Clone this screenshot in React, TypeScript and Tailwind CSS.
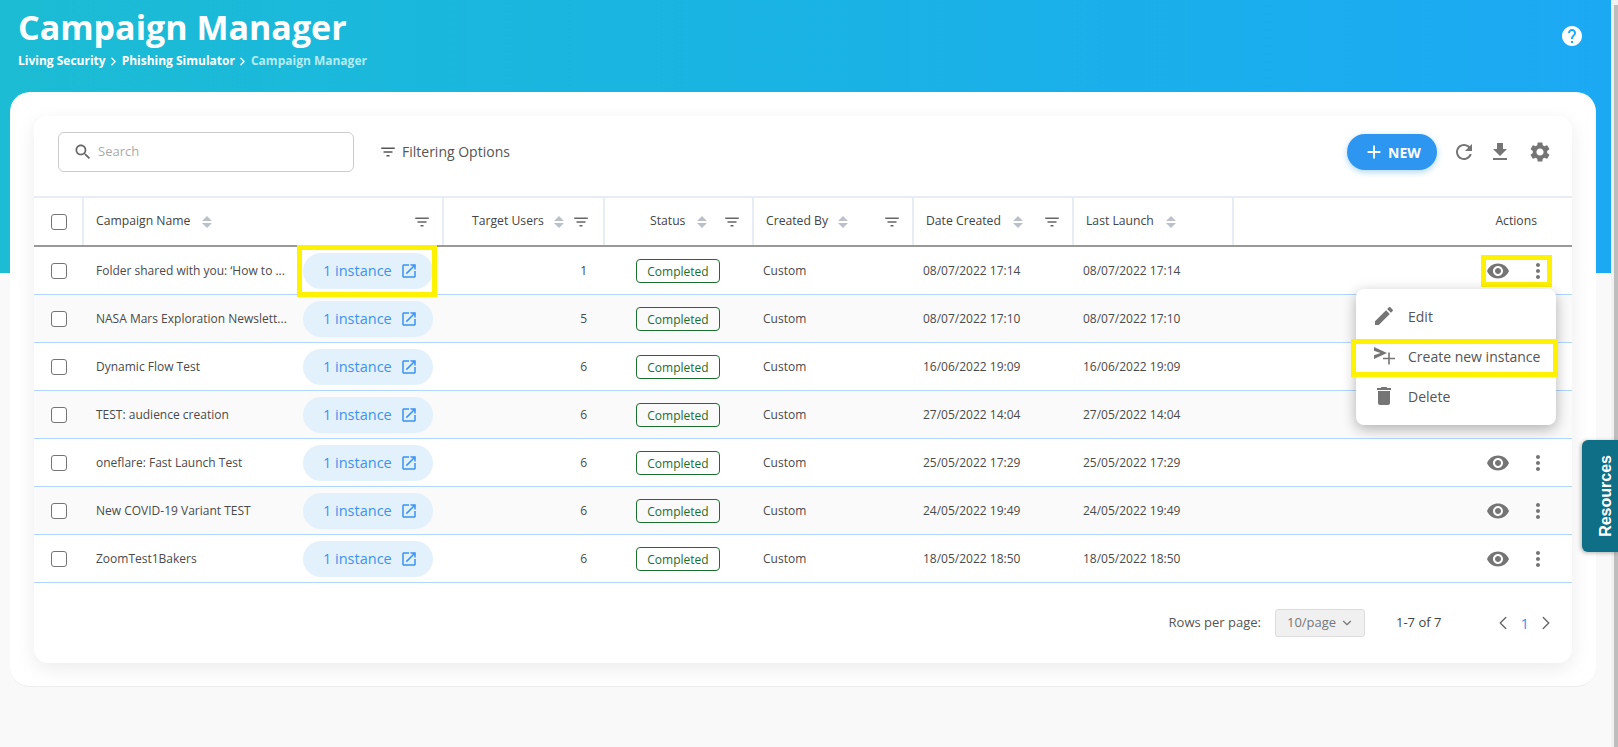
import React from 'react';
import { ChevronDown, ChevronLeft, ChevronRight } from 'lucide-react';

const P = {
  search: 'M15.5 14h-.79l-.28-.27C15.41 12.59 16 11.11 16 9.5 16 5.91 13.09 3 9.5 3S3 5.91 3 9.5 5.91 16 9.5 16c1.61 0 3.09-.59 4.23-1.57l.27.28v.79l5 4.99L20.49 19l-4.99-5zm-6 0C7.01 14 5 11.99 5 9.5S7.01 5 9.5 5 14 7.01 14 9.5 11.99 14 9.5 14z',
  filter: 'M10 18h4v-2h-4v2zM3 6v2h18V6H3zm3 7h12v-2H6v2z',
  refresh: 'M17.65 6.35C16.2 4.9 14.21 4 12 4c-4.42 0-7.99 3.58-7.99 8s3.57 8 7.99 8c3.73 0 6.84-2.55 7.73-6h-2.08c-.82 2.33-3.04 4-5.65 4-3.31 0-6-2.69-6-6s2.69-6 6-6c1.66 0 3.14.69 4.22 1.78L13 11h7V4l-2.35 2.35z',
  download: 'M19 9h-4V3H9v6H5l7 7 7-7zM5 18v2h14v-2H5z',
  gear: 'M19.14 12.94c.04-.3.06-.61.06-.94 0-.32-.02-.64-.07-.94l2.03-1.58c.18-.14.23-.41.12-.61l-1.92-3.32c-.12-.22-.37-.29-.59-.22l-2.39.96c-.5-.38-1.03-.7-1.62-.94l-.36-2.54c-.04-.24-.24-.41-.48-.41h-3.84c-.24 0-.43.17-.47.41l-.36 2.54c-.59.24-1.13.57-1.62.94l-2.39-.96c-.22-.08-.47 0-.59.22L2.74 8.87c-.12.21-.08.47.12.61l2.03 1.58c-.05.3-.09.63-.09.94s.02.64.07.94l-2.03 1.58c-.18.14-.23.41-.12.61l1.92 3.32c.12.22.37.29.59.22l2.39-.96c.5.38 1.03.7 1.62.94l.36 2.54c.05.24.24.41.48.41h3.84c.24 0 .44-.17.47-.41l.36-2.54c.59-.24 1.13-.56 1.62-.94l2.39.96c.22.08.47 0 .59-.22l1.92-3.32c.12-.22.07-.47-.12-.61l-2.01-1.58zM12 15.6c-1.98 0-3.6-1.62-3.6-3.6s1.62-3.6 3.6-3.6 3.6 1.62 3.6 3.6-1.62 3.6-3.6 3.6z',
  eye: 'M12 4.5C7 4.5 2.73 7.61 1 12c1.73 4.39 6 7.5 11 7.5s9.27-3.11 11-7.5c-1.73-4.39-6-7.5-11-7.5zM12 17c-2.76 0-5-2.24-5-5s2.24-5 5-5 5 2.24 5 5-2.24 5-5 5zm0-8c-1.66 0-3 1.34-3 3s1.34 3 3 3 3-1.34 3-3-1.34-3-3-3z',
  dots: 'M12 8c1.1 0 2-.9 2-2s-.9-2-2-2-2 .9-2 2 .9 2 2 2zm0 2c-1.1 0-2 .9-2 2s.9 2 2 2 2-.9 2-2-.9-2-2-2zm0 6c-1.1 0-2 .9-2 2s.9 2 2 2 2-.9 2-2-.9-2-2-2z',
  open: 'M19 19H5V5h7V3H5c-1.11 0-2 .9-2 2v14c0 1.1.89 2 2 2h14c1.1 0 2-.9 2-2v-7h-2v7zM14 3v2h3.59l-9.83 9.83 1.41 1.41L19 6.41V10h2V3h-7z',
  edit: 'M3 17.25V21h3.75L17.81 9.94l-3.75-3.75L3 17.25zM20.71 7.04c.39-.39.39-1.02 0-1.41l-2.34-2.34c-.39-.39-1.02-.39-1.41 0l-1.83 1.83 3.75 3.75 1.83-1.83z',
  trash: 'M6 19c0 1.1.9 2 2 2h8c1.1 0 2-.9 2-2V7H6v12zM19 4h-3.5l-1-1h-5l-1 1H5v2h14V4z',
  help: 'M12 2C6.48 2 2 6.48 2 12s4.48 10 10 10 10-4.48 10-10S17.52 2 12 2zm1 17h-2v-2h2v2zm2.07-7.75l-.9.92C13.45 12.9 13 13.5 13 15h-2v-.5c0-1.1.45-2.1 1.17-2.83l1.24-1.26c.37-.36.59-.86.59-1.41 0-1.1-.9-2-2-2s-2 .9-2 2H8c0-2.21 1.79-4 4-4s4 1.79 4 4c0 .88-.36 1.68-.93 2.25z',
  plus: 'M19 13h-6v6h-2v-6H5v-2h6V5h2v6h6v2z',
  sendPlus: 'M2 3 15 9 2 15V11.2L8.5 9 2 6.8zM16.2 8.5h1.6v5.2H23v1.6h-5.2v5.2h-1.6v-5.2H11v-1.6h5.2z',
};

const Icon = ({ d, className }: { d: string; className: string }) => (
  <svg viewBox="0 0 24 24" fill="currentColor" className={className}>
    <path d={d} />
  </svg>
);

const Sort = ({ className = '' }: { className?: string }) => (
  <svg viewBox="0 0 10 14" className={`h-[14px] w-[10px] shrink-0 fill-[#bcc0c9] ${className}`}>
    <path d="M5 1 10 6H0zM5 13 0 8h10z" />
  </svg>
);

const Filter = ({ className = '' }: { className?: string }) => (
  <Icon d={P.filter} className={`h-[18px] w-[18px] shrink-0 text-[#666] ${className}`} />
);

const rows = [
  { name: 'Folder shared with you: ‘How to ...', users: 1, date: '08/07/2022 17:14' },
  { name: 'NASA Mars Exploration Newslett...', users: 5, date: '08/07/2022 17:10' },
  { name: 'Dynamic Flow Test', users: 6, date: '16/06/2022 19:09' },
  { name: 'TEST: audience creation', users: 6, date: '27/05/2022 14:04' },
  { name: 'oneflare: Fast Launch Test', users: 6, date: '25/05/2022 17:29' },
  { name: 'New COVID-19 Variant TEST', users: 6, date: '24/05/2022 19:49' },
  { name: 'ZoomTest1Bakers', users: 6, date: '18/05/2022 18:50' },
];

const cols = 'grid grid-cols-[50px_360px_161px_149px_160px_160px_160px_1fr]';
const headCell = 'flex items-center border-r-2 border-[#e8ecf5]';

function Checkbox() {
  return <span className="block h-4 w-4 rounded-[3px] border border-[#757575] bg-white" />;
}

export default function App() {
  return (
    <div className="relative flex h-[747px] w-[1618px] overflow-hidden bg-[#f9f9f9] font-['Open_Sans',sans-serif]">
      <main className="w-[1611px] shrink-0">
        {/* Header */}
        <header className="flex h-[273px] items-start justify-between bg-linear-to-r from-[#1cbcd4] to-[#1ca9f4] pl-[18px] pr-[27px] text-white">
          <div>
            <h1 className="mt-[3px] text-[34px] font-bold leading-[48px]">Campaign Manager</h1>
            <div className="mt-[1px] flex items-center text-[12px] font-bold leading-[18px]">
              <span>Living Security</span>
              <ChevronRight size={13} strokeWidth={2.5} className="mx-[1.5px]" />
              <span>Phishing Simulator</span>
              <ChevronRight size={13} strokeWidth={2.5} className="mx-[1.5px]" />
              <span className="text-[#b5ecf3]">Campaign Manager</span>
            </div>
          </div>
          <Icon d={P.help} className="mt-[24px] h-6 w-6" />
        </header>

        {/* White panel */}
        <section className="mx-[10px] mt-[-181px] h-[595px] w-[1586px] rounded-[20px] border-b border-[#eee] bg-white px-[24px] pt-[24px]">
          <div className="relative h-[547px] rounded-[14px] bg-white shadow-[0_6px_20px_rgba(0,0,0,0.08)]">
            {/* Toolbar */}
            <div className="flex h-[80px] items-center pb-[8px] pl-[24px] pr-[20px]">
              <div className="flex h-[40px] w-[296px] items-center rounded-[6px] border border-[#ccc] pl-[14px]">
                <Icon d={P.search} className="h-5 w-5 text-[#666]" />
                <span className="ml-[5px] text-[13px] text-[#aaa]">Search</span>
              </div>
              <Icon d={P.filter} className="ml-[25px] h-[18px] w-[18px] text-[#555]" />
              <span className="ml-[5px] mt-[-2px] text-[14px] text-[#555]">Filtering Options</span>
              <button className="ml-auto flex h-[36px] w-[90px] items-center justify-center rounded-full bg-[#2d96f0] text-[14px] font-bold text-white shadow-[0_2px_6px_rgba(45,150,240,0.4)]">
                <Icon d={P.plus} className="mr-[3px] h-[22px] w-[22px]" />
                NEW
              </button>
              <Icon d={P.refresh} className="ml-[15px] h-[24px] w-[24px] text-[#757575]" />
              <Icon d={P.download} className="ml-[12px] h-[24px] w-[24px] text-[#757575]" />
              <Icon d={P.gear} className="ml-[16px] h-[24px] w-[24px] text-[#757575]" />
            </div>

            {/* Table head */}
            <div className={`${cols} h-[51px] border-y-2 border-t-[#e8ecf5] border-b-[#999] text-[12.2px] font-medium text-[#444]`}>
              <div className={`${headCell} pl-[17px]`}><Checkbox /></div>
              <div className={`${headCell} pl-[12px] pr-[11px]`}>
                <span>Campaign Name</span>
                <Sort className="ml-[12px]" />
                <Filter className="ml-auto" />
              </div>
              <div className={`${headCell} pl-[28px]`}>
                <span>Target Users</span>
                <Sort className="ml-[10px]" />
                <Filter className="ml-[8px]" />
              </div>
              <div className={`${headCell} pl-[45px]`}>
                <span>Status</span>
                <Sort className="ml-[12px]" />
                <Filter className="ml-[16px]" />
              </div>
              <div className={`${headCell} pl-[12px] pr-[11px]`}>
                <span>Created By</span>
                <Sort className="ml-[10px]" />
                <Filter className="ml-auto" />
              </div>
              <div className={`${headCell} pl-[12px] pr-[11px]`}>
                <span>Date Created</span>
                <Sort className="ml-[12px]" />
                <Filter className="ml-auto" />
              </div>
              <div className={`${headCell} pl-[12px]`}>
                <span>Last Launch</span>
                <Sort className="ml-[12px]" />
              </div>
              <div className="flex items-center justify-end pr-[35px]">Actions</div>
            </div>

            {/* Rows */}
            {rows.map((r, i) => (
              <div
                key={r.name}
                className={`${cols} h-[48px] items-center border-b border-[#b3d6fb] text-[12px] text-[#4a4a4a] ${i % 2 === 1 ? 'bg-[#fafafa]' : 'bg-white'}`}
              >
                <div className="pl-[17px]"><Checkbox /></div>
                <div className="flex items-center pl-[12px]">
                  <span className="mr-[17px] w-[190px] whitespace-nowrap">{r.name}</span>
                  <div className="relative flex h-[36px] w-[130px] items-center rounded-full bg-[#e3f1fd] pl-[20px] text-[14.5px] text-[#3b93f0]">
                    1 instance
                    <Icon d={P.open} className="ml-[8px] h-[18px] w-[18px]" />
                    {i === 0 && <div className="absolute inset-y-[-8px] left-[-6px] right-[-4px] border-[5px] border-[#fff200]" />}
                  </div>
                </div>
                <div className="pr-[18px] text-right">{r.users}</div>
                <div className="pl-[31px]">
                  <span className="mt-[1px] flex h-[24px] w-[84px] items-center justify-center rounded-[4px] border border-[#1b6e2e] pt-[1px] text-[12px] font-medium text-[#1b6e2e]">
                    Completed
                  </span>
                </div>
                <div className="pl-[9px]">Custom</div>
                <div className="pl-[9px]">{r.date}</div>
                <div className="pl-[9px]">{r.date}</div>
                <div className="flex items-center justify-end gap-[16px] pr-[22px] text-[#757575]">
                  <div className="relative flex items-center gap-[16px]">
                    <Icon d={P.eye} className="h-6 w-6" />
                    <Icon d={P.dots} className="h-6 w-6" />
                    {i === 0 && <div className="absolute inset-y-[-4px] left-[-5px] right-[-2px] border-[5px] border-[#fff200]" />}
                  </div>
                </div>
              </div>
            ))}

            {/* Footer */}
            <div className="flex h-[80px] items-center justify-end pr-[15px] text-[13px] text-[#555]">
              <span>Rows per page:</span>
              <div className="ml-[14px] flex h-[28px] w-[90px] items-center justify-between rounded-[3px] border border-[#ddd] bg-[#f0f0f0] pl-[11px] pr-[10px] text-[#777]">
                10/page
                <ChevronDown size={14} />
              </div>
              <span className="ml-[31px] text-[#444]">1-7 of 7</span>
              <ChevronLeft size={22} strokeWidth={1.5} className="ml-[51px] text-[#666]" />
              <span className="mx-[6px] text-[15px] text-[#3b93f0]">1</span>
              <ChevronRight size={22} strokeWidth={1.5} className="text-[#666]" />
            </div>

            {/* Row menu */}
            <div className="absolute right-[16px] top-[173px] w-[200px] rounded-[8px] bg-white pb-[9px] pt-[7px] text-[14px] text-[#555] shadow-[0_4px_14px_rgba(0,0,0,0.3)]">
              <div className="flex h-[40px] items-center gap-[12px] pl-[16px]">
                <Icon d={P.edit} className="h-6 w-6 text-[#757575]" />
                Edit
              </div>
              <div className="relative flex h-[40px] items-center gap-[12px] pl-[16px]">
                <Icon d={P.sendPlus} className="h-6 w-6 text-[#757575]" />
                Create new instance
                <div className="absolute bottom-[-1px] left-[-5px] right-[-2px] top-[3px] border-[5px] border-[#fff200]" />
              </div>
              <div className="flex h-[40px] items-center gap-[12px] pl-[16px]">
                <Icon d={P.trash} className="h-6 w-6 text-[#757575]" />
                Delete
              </div>
            </div>
          </div>
        </section>
      </main>

      {/* Scrollbar */}
      <div className="flex-1 bg-[#f1f1f1] pl-[3px] pt-[5px]">
        <div className="h-full bg-[#bdbdbd]" />
      </div>

      {/* Resources tab */}
      <div className="absolute right-0 top-[440px] flex h-[112px] w-[36px] items-center justify-end rounded-l-[6px] bg-[#0e6f87] pr-[3px] shadow-[-1px_1px_4px_rgba(0,0,0,0.3)]">
        <span className="rotate-180 font-['Liberation_Sans',sans-serif] text-[16px] font-bold leading-[18px] text-white [writing-mode:vertical-rl]">
          Resources
        </span>
      </div>
    </div>
  );
}
